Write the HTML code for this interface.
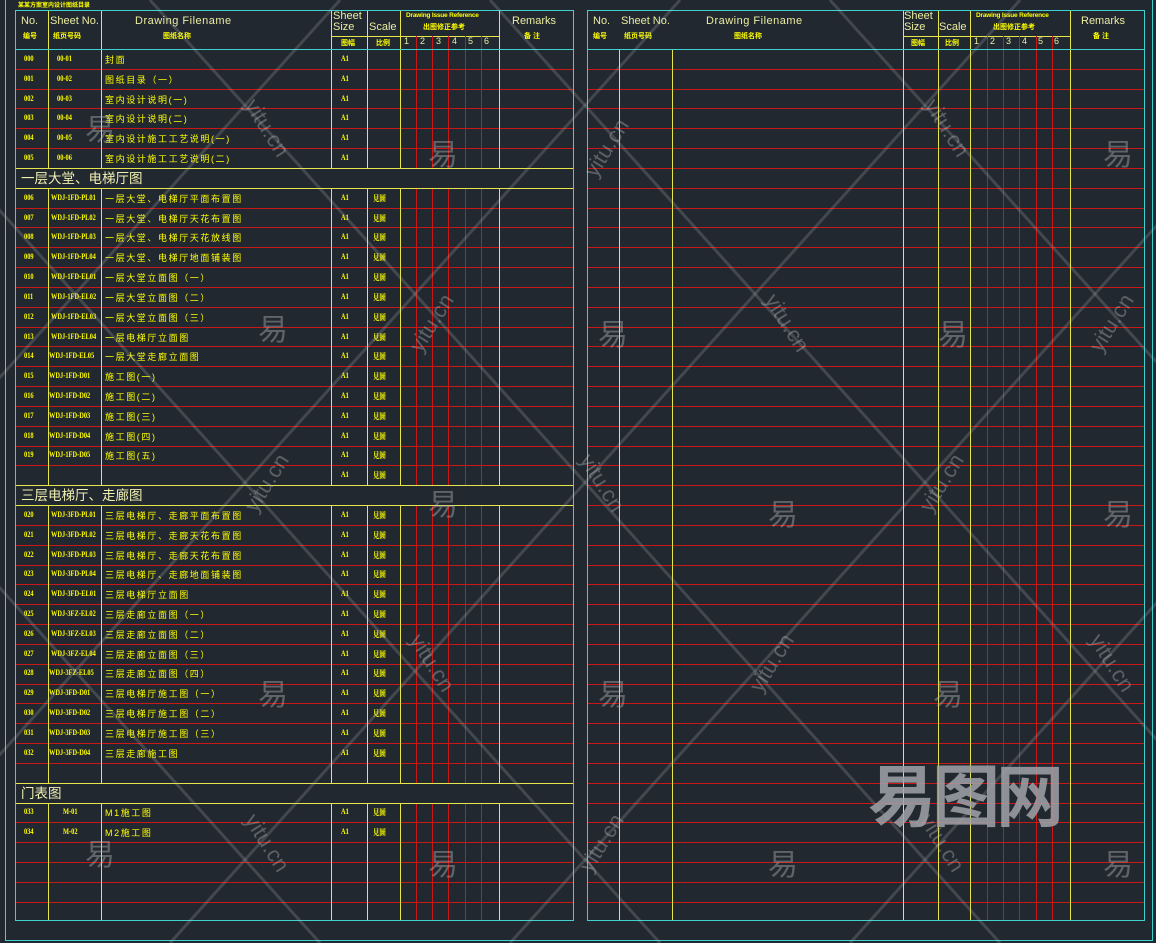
<!DOCTYPE html>
<html><head><meta charset="utf-8">
<style>
*{margin:0;padding:0;box-sizing:border-box}
body{width:1156px;height:943px;background:#212830;position:relative;overflow:hidden;font-family:"Liberation Sans","Noto Sans CJK SC",sans-serif;color:#ffff00}
.abs{position:absolute}
.tbl{position:absolute;top:10px;height:911px}
.hdr{position:absolute;left:0;right:0;top:0;height:39px}
.v{position:absolute;top:0;bottom:0;width:1px}
.y{background:#e6e64a}
.r{background:#c81818}
.h{position:absolute;font-size:11px;color:#ececa0;white-space:nowrap}
.hc{position:absolute;font-size:7px;font-weight:bold;color:#ffff00;white-space:nowrap}
.row{position:absolute;left:0;right:0;height:19.82px}
.row span{position:absolute;top:5px;white-space:nowrap;font-size:8px;font-weight:bold;font-family:"Liberation Serif","Noto Serif CJK SC",serif;transform:scaleX(.8);transform-origin:left}
.row span.f{font-family:"Liberation Sans","Noto Sans CJK SC",sans-serif;font-weight:normal;font-size:9px;letter-spacing:1.6px;transform:none;top:4px}
.sec{position:absolute;left:1px;height:19px;font-size:13.5px;color:#f0f0b0;padding:0 0 0 5px;font-family:"Liberation Sans","Noto Sans CJK SC",sans-serif;line-height:19px}
.wm{position:absolute;color:rgba(190,190,190,.4);font-size:30px;font-family:"Noto Sans CJK SC",sans-serif}
.yt{position:absolute;color:rgba(190,190,190,.38);font-size:22px;font-family:"Liberation Sans",sans-serif}
.dn{transform:rotate(58deg)}
.up{transform:rotate(-58deg)}
</style></head><body>
<div class="abs" style="left:5px;top:-5px;right:3px;height:946px;border:1px solid #3fd0d0"></div>
<div class="abs" style="left:18px;top:0;font-size:6px;font-weight:bold">某某方案室内设计图纸目录</div>

<svg class="abs" style="left:0;top:0" width="1156" height="943" shape-rendering="crispEdges">
 <g stroke="#c81818" stroke-width="1" fill="none">
  <path d="M15 69.5H573M15 89.5H573M15 108.5H573M15 128.5H573M15 148.5H573M15 208.5H573M15 227.5H573M15 247.5H573M15 267.5H573M15 287.5H573M15 307.5H573M15 327.5H573M15 346.5H573M15 366.5H573M15 386.5H573M15 406.5H573M15 426.5H573M15 446.5H573M15 465.5H573M15 525.5H573M15 545.5H573M15 565.5H573M15 584.5H573M15 604.5H573M15 624.5H573M15 644.5H573M15 664.5H573M15 684.5H573M15 703.5H573M15 723.5H573M15 743.5H573M15 763.5H573M15 822.5H573M15 842.5H573M15 862.5H573M15 882.5H573M15 902.5H573"/>
  <path d="M587 69.5H1145M587 89.5H1145M587 108.5H1145M587 128.5H1145M587 148.5H1145M587 168.5H1145M587 188.5H1145M587 208.5H1145M587 227.5H1145M587 247.5H1145M587 267.5H1145M587 287.5H1145M587 307.5H1145M587 327.5H1145M587 346.5H1145M587 366.5H1145M587 386.5H1145M587 406.5H1145M587 426.5H1145M587 446.5H1145M587 465.5H1145M587 485.5H1145M587 505.5H1145M587 525.5H1145M587 545.5H1145M587 565.5H1145M587 584.5H1145M587 604.5H1145M587 624.5H1145M587 644.5H1145M587 664.5H1145M587 684.5H1145M587 703.5H1145M587 723.5H1145M587 743.5H1145M587 763.5H1145M587 783.5H1145M587 803.5H1145M587 822.5H1145M587 842.5H1145M587 862.5H1145M587 882.5H1145M587 902.5H1145"/>
  <path d="M416.5 49V168M432.5 49V168M448.5 49V168M465.5 49V168M481.5 49V168M416.5 188V485M432.5 188V485M448.5 188V485M465.5 188V485M481.5 188V485M416.5 505V783M432.5 505V783M448.5 505V783M465.5 505V783M481.5 505V783M416.5 803V921M432.5 803V921M448.5 803V921M465.5 803V921M481.5 803V921"/>
  <path d="M987.5 49V921M1003.5 49V921M1019.5 49V921M1036.5 49V921M1052.5 49V921"/>
 </g>
 <g stroke="#e6e64a" stroke-width="1" fill="none">
  <path d="M15 168.5H573M15 188.5H573M15 485.5H573M15 505.5H573M15 783.5H573M15 803.5H573"/>
  <path d="M48.5 10V168M101.5 10V168M331.5 10V168M367.5 10V168M400.5 10V168M499.5 10V168M48.5 188V485M101.5 188V485M331.5 188V485M367.5 188V485M400.5 188V485M499.5 188V485M48.5 505V783M101.5 505V783M331.5 505V783M367.5 505V783M400.5 505V783M499.5 505V783M48.5 803V921M101.5 803V921M331.5 803V921M367.5 803V921M400.5 803V921M499.5 803V921"/>
  <path d="M619.5 49V921M672.5 49V921M903.5 10V921M938.5 10V921M970.5 10V921M1070.5 10V921"/>
  <path d="M331 36.5H499M903 36.5H1070"/>
 </g>
 <g stroke="#c81818" fill="none"><path d="M416.5 36V49M432.5 36V49M448.5 36V49M465.5 36V49M481.5 36V49M987.5 36V49M1003.5 36V49M1019.5 36V49M1036.5 36V49M1052.5 36V49"/></g>
 <g stroke="#3fd0d0" fill="none">
  <rect x="15.5" y="10.5" width="558" height="910"/><rect x="587.5" y="10.5" width="557" height="910"/>
  <path d="M15 49.5H573M587 49.5H1145"/>
 </g>
</svg>

<!-- LEFT TABLE -->
<div class="tbl" style="left:15px;width:559px">
 <div class="hdr">
  <div class="h" style="left:6px;top:5px">No.</div><div class="hc" style="left:8px;top:21px">编号</div>
  <div class="h" style="left:35px;top:5px">Sheet No.</div><div class="hc" style="left:38px;top:21px">纸页号码</div>
  <div class="h" style="left:120px;top:5px;letter-spacing:.5px">Drawing Filename</div><div class="hc" style="left:148px;top:21px">图纸名称</div>
  <div class="h" style="left:318px;top:1px;line-height:11px">Sheet<br>Size</div><div class="hc" style="left:326px;top:28px">图幅</div>
  <div class="h" style="left:354px;top:11px">Scale</div><div class="hc" style="left:361px;top:28px">比例</div>
  <div class="hc" style="left:391px;top:2px;font-size:6.5px;letter-spacing:-.2px">Drawing Issue Reference</div><div class="hc" style="left:408px;top:12px">出图修正参考</div>
  <div class="h" style="left:389px;top:26px;font-size:9px;word-spacing:8.5px">1 2 3 4 5 6</div>
  <div class="h" style="left:497px;top:5px">Remarks</div><div class="hc" style="left:509px;top:21px">备 注</div>
 </div>
 <div class="abs" style="left:0;right:0;top:39px;bottom:0">
  <div class="row" style="top:0"><span style="left:9px">000</span><span style="left:42px">00-01</span><span class="f" style="left:90px">封面</span><span style="left:326px">A1</span></div>
  <div class="row" style="top:19.82px"><span style="left:9px">001</span><span style="left:42px">00-02</span><span class="f" style="left:90px">图纸目录（一）</span><span style="left:326px">A1</span></div>
  <div class="row" style="top:39.64px"><span style="left:9px">002</span><span style="left:42px">00-03</span><span class="f" style="left:90px">室内设计说明(一)</span><span style="left:326px">A1</span></div>
  <div class="row" style="top:59.46px"><span style="left:9px">003</span><span style="left:42px">00-04</span><span class="f" style="left:90px">室内设计说明(二)</span><span style="left:326px">A1</span></div>
  <div class="row" style="top:79.28px"><span style="left:9px">004</span><span style="left:42px">00-05</span><span class="f" style="left:90px">室内设计施工工艺说明(一)</span><span style="left:326px">A1</span></div>
  <div class="row" style="top:99.1px"><span style="left:9px">005</span><span style="left:42px">00-06</span><span class="f" style="left:90px">室内设计施工工艺说明(二)</span><span style="left:326px">A1</span></div>
  <div class="sec" style="top:119.5px">一层大堂、电梯厅图</div>
  <div class="row" style="top:138.7px"><span style="left:9px">006</span><span style="left:36px">WDJ-1FD-PL01</span><span class="f" style="left:90px">一层大堂、电梯厅平面布置图</span><span style="left:326px">A1</span><span style="left:358px">見圖</span></div>
  <div class="row" style="top:158.6px"><span style="left:9px">007</span><span style="left:36px">WDJ-1FD-PL02</span><span class="f" style="left:90px">一层大堂、电梯厅天花布置图</span><span style="left:326px">A1</span><span style="left:358px">見圖</span></div>
  <div class="row" style="top:178.4px"><span style="left:9px">008</span><span style="left:36px">WDJ-1FD-PL03</span><span class="f" style="left:90px">一层大堂、电梯厅天花放线图</span><span style="left:326px">A1</span><span style="left:358px">見圖</span></div>
  <div class="row" style="top:198.2px"><span style="left:9px">009</span><span style="left:36px">WDJ-1FD-PL04</span><span class="f" style="left:90px">一层大堂、电梯厅地面铺装图</span><span style="left:326px">A1</span><span style="left:358px">見圖</span></div>
  <div class="row" style="top:218px"><span style="left:9px">010</span><span style="left:36px">WDJ-1FD-EL01</span><span class="f" style="left:90px">一层大堂立面图（一）</span><span style="left:326px">A1</span><span style="left:358px">見圖</span></div>
  <div class="row" style="top:237.8px"><span style="left:9px">011</span><span style="left:36px">WDJ-1FD-EL02</span><span class="f" style="left:90px">一层大堂立面图（二）</span><span style="left:326px">A1</span><span style="left:358px">見圖</span></div>
  <div class="row" style="top:257.7px"><span style="left:9px">012</span><span style="left:36px">WDJ-1FD-EL03</span><span class="f" style="left:90px">一层大堂立面图（三）</span><span style="left:326px">A1</span><span style="left:358px">見圖</span></div>
  <div class="row" style="top:277.5px"><span style="left:9px">013</span><span style="left:36px">WDJ-1FD-EL04</span><span class="f" style="left:90px">一层电梯厅立面图</span><span style="left:326px">A1</span><span style="left:358px">見圖</span></div>
  <div class="row" style="top:297.3px"><span style="left:9px">014</span><span style="left:34px">WDJ-1FD-EL05</span><span class="f" style="left:90px">一层大堂走廊立面图</span><span style="left:326px">A1</span><span style="left:358px">見圖</span></div>
  <div class="row" style="top:317.1px"><span style="left:9px">015</span><span style="left:34px">WDJ-1FD-D01</span><span class="f" style="left:90px">施工图(一)</span><span style="left:326px">A1</span><span style="left:358px">見圖</span></div>
  <div class="row" style="top:336.9px"><span style="left:9px">016</span><span style="left:34px">WDJ-1FD-D02</span><span class="f" style="left:90px">施工图(二)</span><span style="left:326px">A1</span><span style="left:358px">見圖</span></div>
  <div class="row" style="top:356.8px"><span style="left:9px">017</span><span style="left:34px">WDJ-1FD-D03</span><span class="f" style="left:90px">施工图(三)</span><span style="left:326px">A1</span><span style="left:358px">見圖</span></div>
  <div class="row" style="top:376.6px"><span style="left:9px">018</span><span style="left:34px">WDJ-1FD-D04</span><span class="f" style="left:90px">施工图(四)</span><span style="left:326px">A1</span><span style="left:358px">見圖</span></div>
  <div class="row" style="top:396.4px"><span style="left:9px">019</span><span style="left:34px">WDJ-1FD-D05</span><span class="f" style="left:90px">施工图(五)</span><span style="left:326px">A1</span><span style="left:358px">見圖</span></div>
  <div class="row" style="top:416.2px"><span style="left:326px">A1</span><span style="left:358px">見圖</span></div>
  <div class="sec" style="top:436.5px">三层电梯厅、走廊图</div>
  <div class="row" style="top:455.9px"><span style="left:9px">020</span><span style="left:36px">WDJ-3FD-PL01</span><span class="f" style="left:90px">三层电梯厅、走廊平面布置图</span><span style="left:326px">A1</span><span style="left:358px">見圖</span></div>
  <div class="row" style="top:475.7px"><span style="left:9px">021</span><span style="left:36px">WDJ-3FD-PL02</span><span class="f" style="left:90px">三层电梯厅、走廊天花布置图</span><span style="left:326px">A1</span><span style="left:358px">見圖</span></div>
  <div class="row" style="top:495.5px"><span style="left:9px">022</span><span style="left:36px">WDJ-3FD-PL03</span><span class="f" style="left:90px">三层电梯厅、走廊天花布置图</span><span style="left:326px">A1</span><span style="left:358px">見圖</span></div>
  <div class="row" style="top:515.3px"><span style="left:9px">023</span><span style="left:36px">WDJ-3FD-PL04</span><span class="f" style="left:90px">三层电梯厅、走廊地面铺装图</span><span style="left:326px">A1</span><span style="left:358px">見圖</span></div>
  <div class="row" style="top:535.1px"><span style="left:9px">024</span><span style="left:36px">WDJ-3FD-EL01</span><span class="f" style="left:90px">三层电梯厅立面图</span><span style="left:326px">A1</span><span style="left:358px">見圖</span></div>
  <div class="row" style="top:555px"><span style="left:9px">025</span><span style="left:36px">WDJ-3FZ-EL02</span><span class="f" style="left:90px">三层走廊立面图（一）</span><span style="left:326px">A1</span><span style="left:358px">見圖</span></div>
  <div class="row" style="top:574.8px"><span style="left:9px">026</span><span style="left:36px">WDJ-3FZ-EL03</span><span class="f" style="left:90px">三层走廊立面图（二）</span><span style="left:326px">A1</span><span style="left:358px">見圖</span></div>
  <div class="row" style="top:594.6px"><span style="left:9px">027</span><span style="left:36px">WDJ-3FZ-EL04</span><span class="f" style="left:90px">三层走廊立面图（三）</span><span style="left:326px">A1</span><span style="left:358px">見圖</span></div>
  <div class="row" style="top:614.4px"><span style="left:9px">028</span><span style="left:34px">WDJ-3FZ-EL05</span><span class="f" style="left:90px">三层走廊立面图（四）</span><span style="left:326px">A1</span><span style="left:358px">見圖</span></div>
  <div class="row" style="top:634.2px"><span style="left:9px">029</span><span style="left:34px">WDJ-3FD-D01</span><span class="f" style="left:90px">三层电梯厅施工图（一）</span><span style="left:326px">A1</span><span style="left:358px">見圖</span></div>
  <div class="row" style="top:654.1px"><span style="left:9px">030</span><span style="left:34px">WDJ-3FD-D02</span><span class="f" style="left:90px">三层电梯厅施工图（二）</span><span style="left:326px">A1</span><span style="left:358px">見圖</span></div>
  <div class="row" style="top:673.9px"><span style="left:9px">031</span><span style="left:34px">WDJ-3FD-D03</span><span class="f" style="left:90px">三层电梯厅施工图（三）</span><span style="left:326px">A1</span><span style="left:358px">見圖</span></div>
  <div class="row" style="top:693.7px"><span style="left:9px">032</span><span style="left:34px">WDJ-3FD-D04</span><span class="f" style="left:90px">三层走廊施工图</span><span style="left:326px">A1</span><span style="left:358px">見圖</span></div>
  <div class="sec" style="top:734.5px">门表图</div>
  <div class="row" style="top:753.2px"><span style="left:9px">033</span><span style="left:48px">M-01</span><span class="f" style="left:90px">M1施工图</span><span style="left:326px">A1</span><span style="left:358px">見圖</span></div>
  <div class="row" style="top:773px"><span style="left:9px">034</span><span style="left:48px">M-02</span><span class="f" style="left:90px">M2施工图</span><span style="left:326px">A1</span><span style="left:358px">見圖</span></div>
 </div>
</div>

<!-- RIGHT TABLE -->
<div class="tbl" style="left:587px;width:558px">
 <div class="hdr">
  <div class="h" style="left:6px;top:5px">No.</div><div class="hc" style="left:6px;top:21px">编号</div>
  <div class="h" style="left:34px;top:5px">Sheet No.</div><div class="hc" style="left:37px;top:21px">纸页号码</div>
  <div class="h" style="left:119px;top:5px;letter-spacing:.5px">Drawing Filename</div><div class="hc" style="left:147px;top:21px">图纸名称</div>
  <div class="h" style="left:317px;top:1px;line-height:11px">Sheet<br>Size</div><div class="hc" style="left:324px;top:28px">图幅</div>
  <div class="h" style="left:352px;top:11px">Scale</div><div class="hc" style="left:358px;top:28px">比例</div>
  <div class="hc" style="left:389px;top:2px;font-size:6.5px;letter-spacing:-.2px">Drawing Issue Reference</div><div class="hc" style="left:406px;top:12px">出图修正参考</div>
  <div class="h" style="left:387px;top:26px;font-size:9px;word-spacing:8.5px">1 2 3 4 5 6</div>
  <div class="h" style="left:494px;top:5px">Remarks</div><div class="hc" style="left:506px;top:21px">备 注</div>
 </div>
</div>

<!-- watermark -->
<svg class="abs" style="left:0;top:0" width="1156" height="943">
 <g stroke="rgba(200,200,200,.2)" stroke-width="3">
  <line x1="150" y1="0" x2="1000" y2="943"/><line x1="490" y1="0" x2="1340" y2="943"/><line x1="830" y1="0" x2="1680" y2="943"/>
  <line x1="-190" y1="0" x2="660" y2="943"/><line x1="-530" y1="0" x2="320" y2="943"/>
  <line x1="340" y1="0" x2="-510" y2="943"/><line x1="680" y1="0" x2="-170" y2="943"/><line x1="1020" y1="0" x2="170" y2="943"/><line x1="1360" y1="0" x2="510" y2="943"/><line x1="1700" y1="0" x2="850" y2="943"/>
 </g>
</svg>
<div class="wm" style="left:85px;top:105px">易</div><div class="wm" style="left:428px;top:130px">易</div><div class="wm" style="left:1103px;top:130px">易</div>
<div class="wm" style="left:258px;top:305px">易</div><div class="wm" style="left:598px;top:310px">易</div><div class="wm" style="left:938px;top:310px">易</div>
<div class="wm" style="left:428px;top:480px">易</div><div class="wm" style="left:768px;top:490px">易</div><div class="wm" style="left:1103px;top:490px">易</div>
<div class="wm" style="left:258px;top:670px">易</div><div class="wm" style="left:598px;top:670px">易</div><div class="wm" style="left:933px;top:670px">易</div>
<div class="wm" style="left:85px;top:830px">易</div><div class="wm" style="left:428px;top:840px">易</div><div class="wm" style="left:768px;top:840px">易</div><div class="wm" style="left:1103px;top:840px">易</div>
<div class="yt dn" style="left:235px;top:115px">yitu.cn</div><div class="yt up" style="left:575px;top:135px">yitu.cn</div><div class="yt dn" style="left:915px;top:115px">yitu.cn</div>
<div class="yt up" style="left:400px;top:310px">yitu.cn</div><div class="yt dn" style="left:755px;top:310px">yitu.cn</div><div class="yt up" style="left:1080px;top:310px">yitu.cn</div>
<div class="yt up" style="left:235px;top:470px">yitu.cn</div><div class="yt dn" style="left:570px;top:470px">yitu.cn</div><div class="yt up" style="left:910px;top:470px">yitu.cn</div>
<div class="yt dn" style="left:400px;top:650px">yitu.cn</div><div class="yt up" style="left:740px;top:650px">yitu.cn</div><div class="yt dn" style="left:1080px;top:650px">yitu.cn</div>
<div class="yt dn" style="left:235px;top:830px">yitu.cn</div><div class="yt up" style="left:570px;top:830px">yitu.cn</div><div class="yt dn" style="left:910px;top:830px">yitu.cn</div>
<div class="abs" style="left:868px;top:752px;font-size:68px;font-weight:bold;color:rgba(160,162,168,.85);letter-spacing:-4px;font-family:'Noto Sans CJK SC',sans-serif;line-height:80px">易图网</div>
</body></html>
